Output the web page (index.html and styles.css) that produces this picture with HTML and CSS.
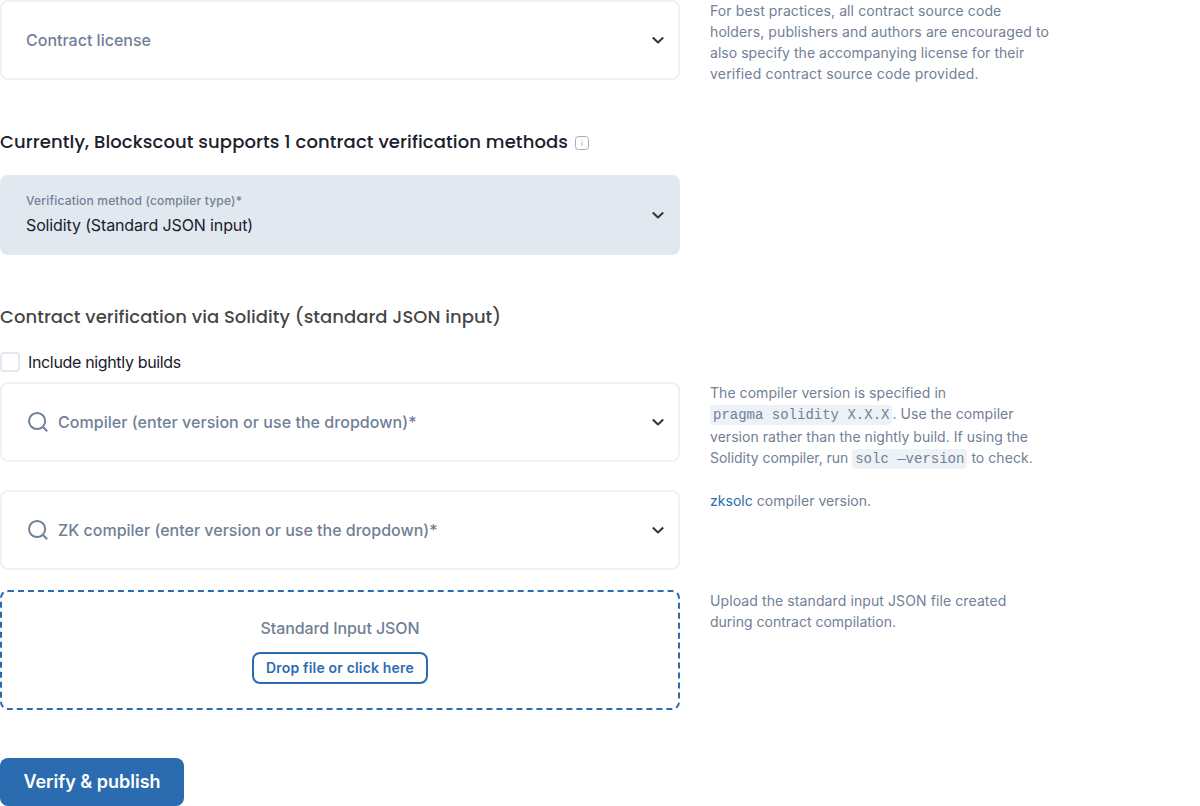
FILE: index.html
```html
<!DOCTYPE html>
<html lang="en">
<head>
<meta charset="utf-8">
<title>Contract verification</title>
<link rel="stylesheet" href="styles.css">
</head>
<body>
<svg width="0" height="0" class="defs">
  <symbol id="chevron" viewBox="0 0 20 20"><path d="M4.8 7.5L10 12.5l5.2-5" fill="none" stroke="currentColor" stroke-width="2" stroke-linejoin="round"/></symbol>
  <symbol id="search" viewBox="0 0 24 24"><circle cx="11.1" cy="11" r="8.1" fill="none" stroke="currentColor" stroke-width="2"/><path d="M17 17l4.2 4.2" fill="none" stroke="currentColor" stroke-width="2"/></symbol>
</svg>
<form class="form">
  <div class="field"><span class="label">Contract license</span><svg class="chevron"><use href="#chevron"/></svg></div>
  <p class="hint license-hint">For best practices, all contract source code<br>holders, publishers and authors are encouraged to<br><span class="snug">also specify the accompanying license for their</span><br><span class="loose">verified contract source code provided.</span></p>

  <h2 class="title methods"><span>Currently, Blockscout supports 1 contract verification methods</span>
    <svg class="info" viewBox="0 0 14 14"><rect x=".5" y=".5" width="13" height="13" rx="3" fill="none" stroke="currentColor"/><path d="M7 6v4M7 4v1" stroke="currentColor" stroke-width="1.3" opacity=".7"/></svg></h2>

  <div class="field filled"><div><div class="small-label">Verification method (compiler type)*</div><div class="value">Solidity (Standard JSON input)</div></div><svg class="chevron"><use href="#chevron"/></svg></div>

  <h2 class="title section">Contract verification via Solidity (standard JSON input)</h2>

  <label class="check"><span class="box"></span><span class="check-text">Include nightly builds</span></label>

  <div class="field"><svg class="search"><use href="#search"/></svg><span class="label compiler-label">Compiler (enter version or use the dropdown)*</span><svg class="chevron"><use href="#chevron"/></svg></div>
  <div class="hint compiler-hint">The compiler version is specified in<br><code>pragma solidity X.X.X</code>. Use the compiler<br><span class="snug">version rather than the nightly build. If using the</span><br><span class="tight">Solidity compiler, run </span><code>solc —version</code> to check.</div>

  <div class="field zk"><svg class="search"><use href="#search"/></svg><span class="label">ZK compiler (enter version or use the dropdown)*</span><svg class="chevron"><use href="#chevron"/></svg></div>
  <p class="hint zk-hint"><a class="link">zksolc</a> compiler version.</p>

  <div class="drop"><span class="label drop-label">Standard Input JSON</span><button type="button" class="outline">Drop file or click here</button></div>
  <p class="hint upload-hint"><span class="wide">Upload the standard input JSON file created</span><br>during contract compilation.</p>

  <button type="button" class="submit">Verify &amp; publish</button>
</form>
</body>
</html>
```
FILE: styles.css
```css
* { box-sizing: border-box; }
body { margin: 0; background: #fff; color: #1a202c; font: 16px/24px Inter, sans-serif; overflow: hidden; }
.defs { position: absolute; }
.form { display: grid; grid-template-columns: 680px 350px; column-gap: 30px; align-items: start; }
.field { grid-column: 1; height: 80px; display: flex; align-items: center; padding: 0 10px 0 24px; border: 2px solid #edf2f7; border-radius: 8px; }
.label { color: #718096; font-weight: 500; }
.compiler-label { letter-spacing: .045px; }
.chevron { width: 20px; height: 20px; margin-left: auto; color: #333435; }
.search { width: 24px; height: 24px; margin-right: 8px; color: #718096; }
.hint { grid-column: 2; margin: 0; color: #718096; font-size: 14px; line-height: 21px; }
.license-hint { letter-spacing: .1px; }
.snug { letter-spacing: .04px; }
.loose { letter-spacing: .19px; }
.tight { letter-spacing: -.04px; }
.wide { letter-spacing: .1px; }
.title { grid-column: 1 / -1; margin: 0; font: 500 18px/24px Poppins, Inter, sans-serif; display: flex; align-items: center; }
.methods { margin-top: 46px; letter-spacing: .1px; }
.info { width: 14px; height: 14px; margin: 2px 0 0 7px; color: #a0aec0; }
.filled { margin-top: 21px; background: #e2e8f0; border-color: #e2e8f0; }
.small-label { color: #718096; font-size: 12px; font-weight: 500; line-height: 16px; letter-spacing: .18px; }
.value { line-height: 24px; margin-top: 4px; letter-spacing: -.13px; }
.section { margin-top: 50px; color: rgba(16, 17, 18, .8); letter-spacing: .025px; }
.check { grid-column: 1 / -1; display: flex; align-items: center; gap: 8px; margin-top: 21px; margin-bottom: 8px; }
.check-text { letter-spacing: -.34px; }
.box { width: 20px; height: 20px; border: 2px solid #e2e8f0; border-radius: 4px; }
.compiler-hint { letter-spacing: .05px; }
code { font: 14px/21px "Liberation Mono", monospace; letter-spacing: 0; background: #edf2f7; border-radius: 4px; padding: 2px 3px; }
.zk { margin-top: 20px; }
.zk-hint { margin-top: 20px; letter-spacing: .03px; }
.link { color: #2b6cb0; }
.drop { height: 120px; margin-top: 20px; display: flex; flex-direction: column; align-items: center; padding-top: 24px; gap: 12px; border: 2px dashed #2b6cb0; border-radius: 8px; }
.drop-label { letter-spacing: -.1px; }
.outline { width: 176px; height: 32px; border: 2px solid #2b6cb0; border-radius: 8px; background: #fff; color: #2b6cb0; font: 600 14px Inter, sans-serif; letter-spacing: .17px; padding: 0 0 2px; }
.upload-hint { margin-top: 20px; }
.submit { width: 184px; height: 48px; margin-top: 48px; border: 0; border-radius: 8px; background: #2b6cb0; color: #fff; font: 600 18px Inter, sans-serif; padding: 0 0 2px; }
```
